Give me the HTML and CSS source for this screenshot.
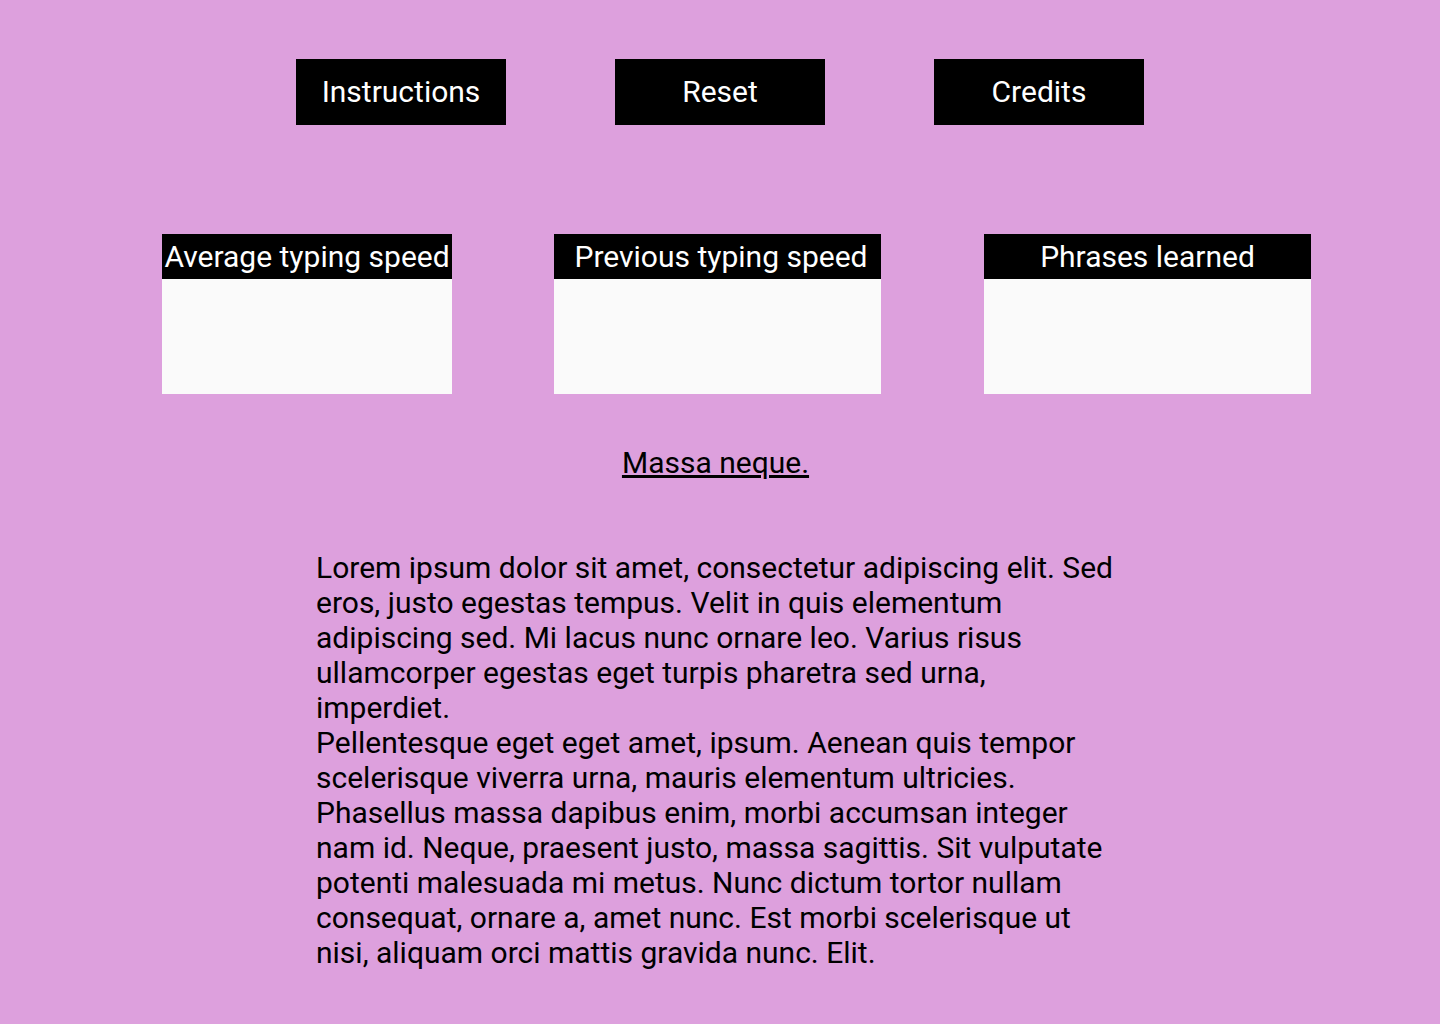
FILE: index.html
```html
<!DOCTYPE html>
<html lang="en">
<head>
<meta charset="utf-8">
<title>Typing</title>
<link rel="stylesheet" href="styles.css">
</head>
<body>
<nav class="nav">
  <button class="btn">Instructions</button>
  <button class="btn">Reset</button>
  <button class="btn">Credits</button>
</nav>
<section class="stats">
  <div class="card card-narrow">
    <div class="card-head">Average typing speed</div>
    <div class="card-body"></div>
  </div>
  <div class="card">
    <div class="card-head card-head-shift">Previous typing speed</div>
    <div class="card-body"></div>
  </div>
  <div class="card card-last">
    <div class="card-head">Phrases learned</div>
    <div class="card-body"></div>
  </div>
</section>
<h2 class="title">Massa neque.</h2>
<div class="text">
  <p>Lorem ipsum dolor sit amet, consectetur adipiscing elit. Sed eros, justo egestas tempus. Velit in quis elementum adipiscing sed. Mi lacus nunc ornare leo. Varius risus ullamcorper egestas eget turpis pharetra sed urna, imperdiet.</p>
  <p>Pellentesque eget eget amet, ipsum. Aenean quis tempor scelerisque viverra urna, mauris elementum ultricies. Phasellus massa dapibus enim, morbi accumsan integer nam id. Neque, praesent justo, massa sagittis. Sit vulputate potenti malesuada mi metus. Nunc dictum tortor nullam consequat, ornare a, amet nunc. Est morbi scelerisque ut nisi, aliquam orci mattis gravida nunc. Elit.</p>
</div>
</body>
</html>
```

FILE: styles.css
```css
* { box-sizing: border-box; }
html, body { margin: 0; padding: 0; }
body {
  background: #dda0dd;
  font-family: Roboto, "Liberation Sans", sans-serif;
  color: #000;
  height: 1024px;
}
.nav {
  display: flex;
  justify-content: center;
  gap: 109px;
  padding-top: 59px;
}
.btn {
  width: 210px;
  height: 66px;
  background: #000;
  color: #fff;
  border: 0;
  padding: 0 0 2px;
  font-family: Roboto, sans-serif;
  font-size: 30px;
  cursor: pointer;
}
.stats {
  display: flex;
  gap: 102px;
  margin: 109px 0 0 162px;
}
.card { width: 327px; }
.card-narrow { width: 290px; }
.card-last { margin-left: 1px; }
.card-head {
  background: #000;
  color: #fff;
  height: 45px;
  line-height: 45px;
  font-size: 30px;
  text-align: center;
  white-space: nowrap;
  display: flex;
  justify-content: center;
}
.card-head-shift { padding-left: 7px; }
.card-body {
  background: #fafafa;
  height: 115px;
}
.title {
  margin: 51px 0 0;
  text-align: center;
  font-size: 30px;
  font-weight: 400;
  line-height: 35px;
  text-decoration: underline;
  padding-right: 9px;
}
.text {
  width: 808px;
  padding-right: 8px;
  margin: 70px auto 0;
  font-size: 30px;
  line-height: 35px;
}
.text p { margin: 0; }
```
